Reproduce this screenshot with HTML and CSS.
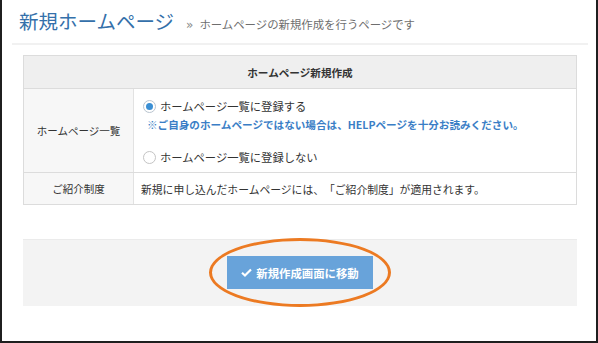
FILE: index.html
```html
<!DOCTYPE html>
<html lang="ja">
<head>
<meta charset="utf-8">
<title>新規ホームページ</title>
<link rel="stylesheet" href="styles.css">
</head>
<body>
<div class="frame">
  <header class="page-head">
    <h1 class="title">新規ホームページ</h1>
    <span class="crumb-sep">»</span>
    <span class="subtitle">ホームページの新規作成を行うページです</span>
  </header>

  <section class="form-table">
    <div class="th">ホームページ新規作成</div>
    <div class="row row-list">
      <div class="label">ホームページ一覧</div>
      <div class="cell cell-options">
        <label class="radio-line"><span class="radio checked"></span>ホームページ一覧に登録する</label>
        <p class="note">※ご自身のホームページではない場合は、HELPページを十分お読みください。</p>
        <label class="radio-line radio-line-last"><span class="radio"></span>ホームページ一覧に登録しない</label>
      </div>
    </div>
    <div class="row row-intro">
      <div class="label">ご紹介制度</div>
      <div class="cell cell-text">新規に申し込んだホームページには、「ご紹介制度」が適用されます。</div>
    </div>
  </section>

  <div class="actions">
    <div class="btn-wrap">
      <button class="btn" type="button">
        <svg class="check" viewBox="0 0 12 10" width="11" height="9" aria-hidden="true"><path d="M1 5.2 L4.3 8.3 L11 1.6" fill="none" stroke="#fff" stroke-width="2.4" stroke-linejoin="miter"/></svg>
        <span>新規作成画面に移動</span>
      </button>
      <span class="highlight"></span>
    </div>
  </div>
</div>
</body>
</html>
```

FILE: styles.css
```css
* { box-sizing: border-box; }

html, body {
  margin: 0;
  padding: 0;
  background: #fff;
}

body {
  font-family: "Noto Sans CJK JP", "Noto Sans", sans-serif;
  color: #333;
  text-spacing-trim: space-all;
}

.frame {
  width: 598px;
  height: 343px;
  border-left: 2px solid #1f1f1f;
  border-right: 2px solid #1f1f1f;
  border-bottom: 2px solid #1f1f1f;
  overflow: hidden;
}

.page-head {
  display: flex;
  align-items: baseline;
  margin: 0 8px 0 10px;
  padding: 6px 0 0 7px;
  height: 45px;
  border-bottom: 2px solid #f1f1f1;
}

.title {
  margin: 0;
  font-size: 19.5px;
  line-height: 30px;
  font-weight: normal;
  color: #3470aa;
}

.crumb-sep {
  margin-left: 12px;
  font-size: 12px;
  color: #8a8a8a;
  font-family: "DejaVu Sans", sans-serif;
}

.subtitle {
  margin-left: 6px;
  font-size: 11.4px;
  color: #6e6e6e;
}

.form-table {
  margin: 10px 0 0 21px;
  width: 554px;
  border: 1px solid #dcdcdc;
}

.th {
  height: 33px;
  display: flex;
  align-items: center;
  justify-content: center;
  background: #efefef;
  border-bottom: 1px solid #dcdcdc;
  font-size: 10.6px;
  font-weight: bold;
  color: #333;
}

.row {
  display: flex;
}

.row + .row {
  border-top: 1px solid #dcdcdc;
}

.row-list { height: 83px; }
.row-intro { height: 32px; }

.label {
  width: 110px;
  flex: none;
  display: flex;
  align-items: center;
  justify-content: center;
  background: #f7f7f7;
  border-right: 1px solid #e2e2e2;
  font-size: 10.5px;
  color: #333;
}

.cell {
  flex: 1;
  font-size: 10.8px;
}

.cell-options {
  padding: 9px 0 0 9px;
}

.cell-text {
  display: flex;
  align-items: center;
  padding-left: 7px;
}

.radio-line {
  display: flex;
  align-items: center;
  height: 16px;
  font-size: 11.3px;
  color: #333;
}

.radio-line-last {
  margin-top: 16px;
}

.radio {
  width: 13px;
  height: 13px;
  flex: none;
  margin-right: 4px;
  border-radius: 50%;
  border: 1px solid #c4c4c4;
  background: #fff;
  position: relative;
}

.radio.checked {
  border-color: #b9c4cf;
}

.radio.checked::after {
  content: "";
  position: absolute;
  left: 2px;
  top: 2px;
  width: 7px;
  height: 7px;
  border-radius: 50%;
  background: #3b8fd4;
}

.note {
  margin: 3px 0 0 4px;
  height: 16px;
  line-height: 16px;
  font-size: 10.6px;
  font-weight: bold;
  color: #3a7ec6;
}

.actions {
  margin: 34px 0 0 21px;
  width: 554px;
  height: 67px;
  background: #f3f3f3;
  border-top: 1px solid #ebebeb;
  display: flex;
  justify-content: center;
  padding-top: 16px;
}

.btn-wrap {
  position: relative;
  width: 146px;
  height: 33px;
}

.btn {
  width: 146px;
  height: 33px;
  border: none;
  padding: 0;
  background: #68a3da;
  color: #fff;
  font-family: "Noto Sans CJK JP", "Noto Sans", sans-serif;
  font-size: 11.4px;
  font-weight: bold;
  display: flex;
  align-items: center;
  justify-content: center;
  gap: 4px;
}

.check {
  display: block;
}

.highlight {
  position: absolute;
  left: -18px;
  top: -18px;
  width: 182px;
  height: 69px;
  border: 3px solid #ec7a22;
  border-radius: 50%;
  pointer-events: none;
}
```
